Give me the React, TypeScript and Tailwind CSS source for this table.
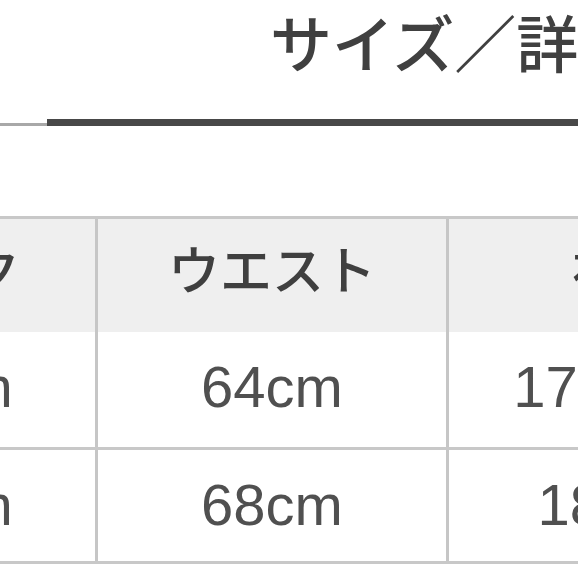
const FONT = '"Liberation Sans", "Noto Sans CJK JP", sans-serif'

const rows = [
  { neck: '38cm', waist: '64cm', sleeve: '174.5cm' },
  { neck: '40cm', waist: '68cm', sleeve: '180cm' },
]

function Cell({
  children,
  head,
  last,
  pad,
}: {
  children: React.ReactNode
  head?: boolean
  last?: boolean
  pad: string
}) {
  return (
    <div
      className={`flex items-center justify-center whitespace-nowrap ${pad} ${
        last ? '' : 'border-r-[3px] border-[#c6c6c6]'
      } ${head ? 'text-[52px] font-medium text-[#3f3f3f]' : 'text-[58px] text-[#505050]'}`}
    >
      {children}
    </div>
  )
}

export default function App() {
  return (
    <div className="w-[578px] h-[578px] overflow-hidden bg-white" style={{ fontFamily: FONT }}>
      {/* title */}
      <div
        className="h-[118px] pl-[270px] pt-[10px] whitespace-nowrap text-[62px] leading-none font-medium text-[#404040]"
        style={{ fontFamily: '"Noto Sans CJK JP", sans-serif' }}
      >
        サイズ／詳細
      </div>
      <div className="flex items-end h-[8px]">
        <div className="w-[47px] h-[3px] bg-[#a8a8a8]" />
        <div className="flex-1 h-[7px] bg-[#484848]" />
      </div>

      {/* size table */}
      <div className="mt-[90px] ml-[-211px] w-max border-t-[3px] border-[#c8c8c8] leading-none">
        <div className="grid grid-cols-[309px_351px_351px] h-[113px] bg-[#efefef]">
          <Cell head pad="pb-[8px]">ネック</Cell>
          <Cell head pad="pb-[8px]">ウエスト</Cell>
          <Cell head last pad="pb-[8px]">袖丈</Cell>
        </div>
        {rows.map((r, i) => {
          const pad = i === 0 ? 'pb-[6px]' : 'pb-[2px]'
          return (
            <div
              key={i}
              className={`grid grid-cols-[309px_351px_351px] border-b-[3px] border-[#c8c8c8] ${
                i === 0 ? 'h-[118px]' : 'h-[114px]'
              }`}
            >
              <Cell pad={pad}>{r.neck}</Cell>
              <Cell pad={pad}>{r.waist}</Cell>
              <Cell last pad={pad}>{r.sleeve}</Cell>
            </div>
          )
        })}
      </div>
    </div>
  )
}
